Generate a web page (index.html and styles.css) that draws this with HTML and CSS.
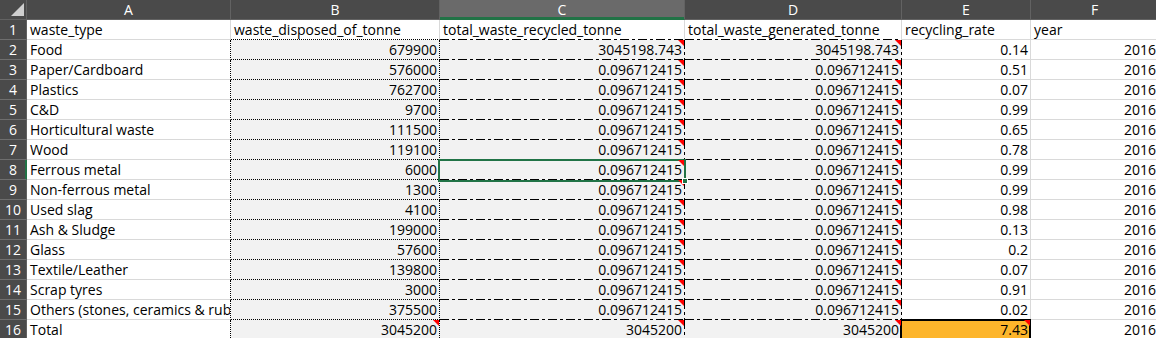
FILE: index.html
```html
<!DOCTYPE html>
<html>

	<head>
		<meta charset="UTF-8">
		<title>waste</title>
		<link rel="stylesheet" href="styles.css">
	</head>

	<body>
		<div class="sheet">
			<div class="corner"><svg width="13" height="13" viewBox="0 0 13 13"><polygon points="13,0 13,13 0,13" fill="#cfcfcf" /></svg></div>
			<div class="col-head">A</div>
			<div class="col-head">B</div>
			<div class="col-head sel">C</div>
			<div class="col-head">D</div>
			<div class="col-head">E</div>
			<div class="col-head">F</div>

			<div class="row-head">1</div>
			<div class="c">waste_type</div>
			<div class="c b-top">waste_disposed_of_tonne</div>
			<div class="c cd-top">total_waste_recycled_tonne</div>
			<div class="c cd-top">total_waste_generated_tonne</div>
			<div class="c">recycling_rate</div>
			<div class="c">year</div>

			<div class="row-head">2</div>
			<div class="c a">Food</div>
			<div class="c b num">679900</div>
			<div class="c cd num note">3045198.743</div>
			<div class="c cd num note">3045198.743</div>
			<div class="c num">0.14</div>
			<div class="c num">2016</div>

			<div class="row-head">3</div>
			<div class="c a">Paper/Cardboard</div>
			<div class="c b num">576000</div>
			<div class="c cd num note">0.096712415</div>
			<div class="c cd num note">0.096712415</div>
			<div class="c num">0.51</div>
			<div class="c num">2016</div>

			<div class="row-head">4</div>
			<div class="c a">Plastics</div>
			<div class="c b num">762700</div>
			<div class="c cd num note">0.096712415</div>
			<div class="c cd num note">0.096712415</div>
			<div class="c num">0.07</div>
			<div class="c num">2016</div>

			<div class="row-head">5</div>
			<div class="c a">C&amp;D</div>
			<div class="c b num">9700</div>
			<div class="c cd num note">0.096712415</div>
			<div class="c cd num note">0.096712415</div>
			<div class="c num">0.99</div>
			<div class="c num">2016</div>

			<div class="row-head">6</div>
			<div class="c a">Horticultural waste</div>
			<div class="c b num">111500</div>
			<div class="c cd num note">0.096712415</div>
			<div class="c cd num note">0.096712415</div>
			<div class="c num">0.65</div>
			<div class="c num">2016</div>

			<div class="row-head">7</div>
			<div class="c a">Wood</div>
			<div class="c b num">119100</div>
			<div class="c cd num note">0.096712415</div>
			<div class="c cd num note">0.096712415</div>
			<div class="c num">0.78</div>
			<div class="c num">2016</div>

			<div class="row-head sel">8</div>
			<div class="c a">Ferrous metal</div>
			<div class="c b num">6000</div>
			<div class="c cd num note"><span class="cursor"></span><span class="handle"></span>0.096712415</div>
			<div class="c cd num note">0.096712415</div>
			<div class="c num">0.99</div>
			<div class="c num">2016</div>

			<div class="row-head">9</div>
			<div class="c a">Non-ferrous metal</div>
			<div class="c b num">1300</div>
			<div class="c cd num note">0.096712415</div>
			<div class="c cd num note">0.096712415</div>
			<div class="c num">0.99</div>
			<div class="c num">2016</div>

			<div class="row-head">10</div>
			<div class="c a">Used slag</div>
			<div class="c b num">4100</div>
			<div class="c cd num note">0.096712415</div>
			<div class="c cd num note">0.096712415</div>
			<div class="c num">0.98</div>
			<div class="c num">2016</div>

			<div class="row-head">11</div>
			<div class="c a">Ash &amp; Sludge</div>
			<div class="c b num">199000</div>
			<div class="c cd num note">0.096712415</div>
			<div class="c cd num note">0.096712415</div>
			<div class="c num">0.13</div>
			<div class="c num">2016</div>

			<div class="row-head">12</div>
			<div class="c a">Glass</div>
			<div class="c b num">57600</div>
			<div class="c cd num note">0.096712415</div>
			<div class="c cd num note">0.096712415</div>
			<div class="c num">0.2</div>
			<div class="c num">2016</div>

			<div class="row-head">13</div>
			<div class="c a">Textile/Leather</div>
			<div class="c b num">139800</div>
			<div class="c cd num note">0.096712415</div>
			<div class="c cd num note">0.096712415</div>
			<div class="c num">0.07</div>
			<div class="c num">2016</div>

			<div class="row-head">14</div>
			<div class="c a">Scrap tyres</div>
			<div class="c b num">3000</div>
			<div class="c cd num note">0.096712415</div>
			<div class="c cd num note">0.096712415</div>
			<div class="c num">0.91</div>
			<div class="c num">2016</div>

			<div class="row-head">15</div>
			<div class="c a">Others (stones, ceramics &amp; rubber etc.)</div>
			<div class="c b num">375500</div>
			<div class="c cd num note">0.096712415</div>
			<div class="c cd num note">0.096712415</div>
			<div class="c num">0.02</div>
			<div class="c num">2016</div>

			<div class="row-head">16</div>
			<div class="c a">Total</div>
			<div class="c b num note">3045200</div>
			<div class="c cd num note">3045200</div>
			<div class="c cd num note">3045200</div>
			<div class="c num note total-rate">7.43</div>
			<div class="c num">2016</div>
		</div>
	</body>

</html>
```

FILE: styles.css
```css
* {
	margin: 0;
	padding: 0;
	box-sizing: border-box;
}

body {
	background: #fff;
	overflow: hidden;
	font-family: "Open Sans", "Liberation Sans", sans-serif;
	font-size: 14px;
	color: #000;
}

.sheet {
	display: grid;
	grid-template-columns: 27px 204px 209px 245px 217px 129px 128px;
	grid-auto-rows: 20px;
	width: 1159px;
}

/* headers */

.corner {
	display: flex;
	justify-content: flex-end;
	align-items: flex-end;
	padding: 0 2px 3px 0;
	background: #4a4a4a;
	border-right: 1px solid #626262;
	border-bottom: 1px solid #626262;
}

.col-head {
	background: #4a4a4a;
	color: #fff;
	text-align: center;
	line-height: 19px;
	border-right: 1px solid #626262;
	border-bottom: 1px solid #626262;
}

.col-head.sel {
	background: #6a6a6a;
	border-bottom-color: #217346;
	box-shadow: inset 0 -2px 0 #217346;
}

.row-head {
	background: #4a4a4a;
	color: #fff;
	text-align: center;
	line-height: 19px;
	border-right: 1px solid #626262;
	border-bottom: 1px solid #6e6e6e;
}

.row-head.sel {
	border-right-color: #217346;
	box-shadow: inset -1px 0 0 #217346;
}

/* cells */

.c {
	position: relative;
	padding: 0 2px 0 3px;
	line-height: 19px;
	white-space: nowrap;
	overflow: hidden;
	background: #fff;
	border-right: 1px solid #d9d9d9;
	border-bottom: 1px solid #d9d9d9;
}

.num {
	text-align: right;
}

.a {
	border-right: 1px dotted #000;
}

.b-top {
	border-bottom: 1px dotted #000;
}

.b {
	background: #f2f2f2;
	border-right: 1px dotted #000;
	border-bottom: 1px dotted #000;
}

.cd-top {
	border-bottom: 0;
	background-image: repeating-linear-gradient(90deg, #000 0 9px, transparent 9px 12px, #000 12px 15px, transparent 15px 18px);
	background-size: 100% 1px;
	background-position: left bottom;
	background-repeat: no-repeat;
}

.cd {
	border-right: 0;
	border-bottom: 0;
	padding-right: 3px;
	background-color: #f2f2f2;
	background-image: repeating-linear-gradient(90deg, #000 0 9px, transparent 9px 12px, #000 12px 15px, transparent 15px 18px),
		repeating-linear-gradient(180deg, #000 0 9px, transparent 9px 12px, #000 12px 15px, transparent 15px 18px);
	background-size: 100% 1px, 1px 100%;
	background-position: left bottom, right top;
	background-repeat: no-repeat;
}

.note::after {
	content: "";
	position: absolute;
	top: 0;
	right: 0;
	z-index: 3;
	border-top: 6px solid #f00;
	border-left: 6px solid transparent;
}

.cd.note::after {
	right: 1px;
}

.c.total-rate,
.c.cd {
	overflow: visible;
}

.total-rate {
	background: #fdb52b;
}

.total-rate::before {
	content: "";
	position: absolute;
	left: -2px;
	top: -1px;
	right: -1px;
	bottom: -2px;
	border: 2px solid #000;
	z-index: 2;
}

/* active cell */

.cursor {
	position: absolute;
	left: -2px;
	top: -1px;
	right: -1px;
	bottom: -2px;
	border: 2px solid #217346;
	z-index: 2;
}

.handle {
	position: absolute;
	right: -3px;
	bottom: -4px;
	width: 6px;
	height: 6px;
	background: #217346;
	border: 1px solid #fff;
	z-index: 4;
}
```
